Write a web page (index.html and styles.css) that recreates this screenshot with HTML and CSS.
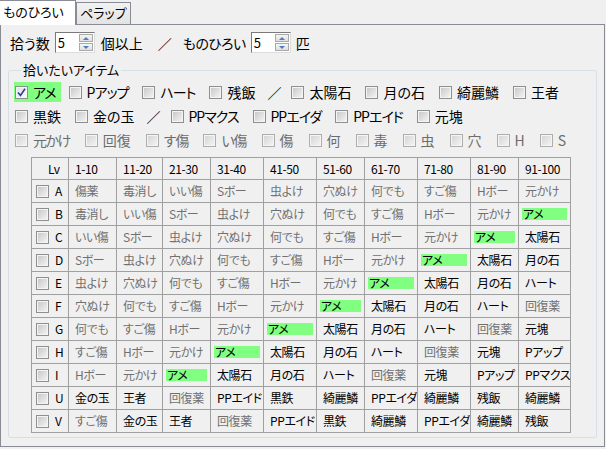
FILE: index.html
```html
<!DOCTYPE html>
<html lang="ja">
<head>
    <meta charset="UTF-8">
    <title>ものひろい</title>
    <link rel="stylesheet" href="styles.css">
</head>
<body>

    <div class="tabs">
        <div class="tab active">ものひろい</div>
        <div class="tab">ペラップ</div>
    </div>

    <div class="panel">

        <div class="count-row">
            <span>拾う数</span>
            <span class="spin"><span class="spin-val">5</span><span class="spin-btns"><span class="spin-up"></span><span class="spin-down"></span></span></span>
            <span class="after-spin">個以上</span>
            <span class="slash">／</span>
            <span class="kana">ものひろい</span>
            <span class="spin"><span class="spin-val">5</span><span class="spin-btns"><span class="spin-up"></span><span class="spin-down"></span></span></span>
            <span>匹</span>
        </div>

        <fieldset class="group">
            <legend>拾いたいアイテム</legend>

            <div class="item-row">
                <label class="item picked">
                    <span class="cb checked"><svg width="9" height="9" viewBox="0 0 9 9"><path d="M1 4.5 L3.5 7.5 L8 0.8" fill="none" stroke="#2b3f8f" stroke-width="1.6"/></svg></span><span class="kana">アメ</span>
                </label>
                <label class="item"><span class="cb"></span><span class="kana">Pアップ</span></label>
                <label class="item"><span class="cb"></span><span class="kana">ハート</span></label>
                <label class="item"><span class="cb"></span>残飯</label>
                <span class="item slash">／</span>
                <label class="item"><span class="cb"></span>太陽石</label>
                <label class="item"><span class="cb"></span>月の石</label>
                <label class="item"><span class="cb"></span>綺麗鱗</label>
                <label class="item"><span class="cb"></span>王者</label>
            </div>

            <div class="item-row">
                <label class="item"><span class="cb"></span>黒鉄</label>
                <label class="item"><span class="cb"></span>金の玉</label>
                <span class="item slash">／</span>
                <label class="item"><span class="cb"></span><span class="kana">PPマクス</span></label>
                <label class="item"><span class="cb"></span><span class="kana">PPエイダ</span></label>
                <label class="item"><span class="cb"></span><span class="kana">PPエイド</span></label>
                <label class="item"><span class="cb"></span>元塊</label>
            </div>

            <div class="item-row disabled">
                <label class="item"><span class="cb"></span><span class="kana narrow">元かけ</span></label>
                <label class="item"><span class="cb"></span>回復</label>
                <label class="item"><span class="cb"></span><span class="kana">す傷</span></label>
                <label class="item"><span class="cb"></span><span class="kana">い傷</span></label>
                <label class="item"><span class="cb"></span>傷</label>
                <label class="item"><span class="cb"></span>何</label>
                <label class="item"><span class="cb"></span>毒</label>
                <label class="item"><span class="cb"></span>虫</label>
                <label class="item"><span class="cb"></span>穴</label>
                <label class="item"><span class="cb"></span>H</label>
                <label class="item"><span class="cb"></span>S</label>
            </div>

            <table class="lv-table">
                <colgroup>
                    <col style="width:37px"><col style="width:48px"><col style="width:46px"><col style="width:48px"><col style="width:53px"><col style="width:53px"><col style="width:48px"><col style="width:53px"><col style="width:53px"><col style="width:48px"><col style="width:52px">
                </colgroup>
                <tr class="head">
                    <td class="lv-head">Lv</td><td>1-10</td><td>11-20</td><td>21-30</td><td>31-40</td><td>41-50</td><td>51-60</td><td>61-70</td><td>71-80</td><td>81-90</td><td>91-100</td>
                </tr>
                <tr>
                    <td class="lv"><span class="cb"></span>A</td>
                    <td class="dim">傷薬</td><td class="dim">毒消し</td><td class="dim">いい傷</td><td class="dim">Sボー</td><td class="dim">虫よけ</td><td class="dim">穴ぬけ</td><td class="dim">何でも</td><td class="dim">すご傷</td><td class="dim">Hボー</td><td class="dim">元かけ</td>
                </tr>
                <tr>
                    <td class="lv"><span class="cb"></span>B</td>
                    <td class="dim">毒消し</td><td class="dim">いい傷</td><td class="dim">Sボー</td><td class="dim">虫よけ</td><td class="dim">穴ぬけ</td><td class="dim">何でも</td><td class="dim">すご傷</td><td class="dim">Hボー</td><td class="dim">元かけ</td><td><span class="hit">アメ</span></td>
                </tr>
                <tr>
                    <td class="lv"><span class="cb"></span>C</td>
                    <td class="dim">いい傷</td><td class="dim">Sボー</td><td class="dim">虫よけ</td><td class="dim">穴ぬけ</td><td class="dim">何でも</td><td class="dim">すご傷</td><td class="dim">Hボー</td><td class="dim">元かけ</td><td><span class="hit">アメ</span></td><td>太陽石</td>
                </tr>
                <tr>
                    <td class="lv"><span class="cb"></span>D</td>
                    <td class="dim">Sボー</td><td class="dim">虫よけ</td><td class="dim">穴ぬけ</td><td class="dim">何でも</td><td class="dim">すご傷</td><td class="dim">Hボー</td><td class="dim">元かけ</td><td><span class="hit">アメ</span></td><td>太陽石</td><td>月の石</td>
                </tr>
                <tr>
                    <td class="lv"><span class="cb"></span>E</td>
                    <td class="dim">虫よけ</td><td class="dim">穴ぬけ</td><td class="dim">何でも</td><td class="dim">すご傷</td><td class="dim">Hボー</td><td class="dim">元かけ</td><td><span class="hit">アメ</span></td><td>太陽石</td><td>月の石</td><td>ハート</td>
                </tr>
                <tr>
                    <td class="lv"><span class="cb"></span>F</td>
                    <td class="dim">穴ぬけ</td><td class="dim">何でも</td><td class="dim">すご傷</td><td class="dim">Hボー</td><td class="dim">元かけ</td><td><span class="hit">アメ</span></td><td>太陽石</td><td>月の石</td><td>ハート</td><td class="dim">回復薬</td>
                </tr>
                <tr>
                    <td class="lv"><span class="cb"></span>G</td>
                    <td class="dim">何でも</td><td class="dim">すご傷</td><td class="dim">Hボー</td><td class="dim">元かけ</td><td><span class="hit">アメ</span></td><td>太陽石</td><td>月の石</td><td>ハート</td><td class="dim">回復薬</td><td>元塊</td>
                </tr>
                <tr>
                    <td class="lv"><span class="cb"></span>H</td>
                    <td class="dim">すご傷</td><td class="dim">Hボー</td><td class="dim">元かけ</td><td><span class="hit">アメ</span></td><td>太陽石</td><td>月の石</td><td>ハート</td><td class="dim">回復薬</td><td>元塊</td><td>Pアップ</td>
                </tr>
                <tr>
                    <td class="lv"><span class="cb"></span>I</td>
                    <td class="dim">Hボー</td><td class="dim">元かけ</td><td><span class="hit">アメ</span></td><td>太陽石</td><td>月の石</td><td>ハート</td><td class="dim">回復薬</td><td>元塊</td><td>Pアップ</td><td>PPマクス</td>
                </tr>
                <tr>
                    <td class="lv"><span class="cb"></span>U</td>
                    <td>金の玉</td><td>王者</td><td class="dim">回復薬</td><td>PPエイド</td><td>黒鉄</td><td>綺麗鱗</td><td>PPエイダ</td><td>綺麗鱗</td><td>残飯</td><td>綺麗鱗</td>
                </tr>
                <tr>
                    <td class="lv"><span class="cb"></span>V</td>
                    <td class="dim">すご傷</td><td>金の玉</td><td>王者</td><td class="dim">回復薬</td><td>PPエイド</td><td>黒鉄</td><td>綺麗鱗</td><td>PPエイダ</td><td>綺麗鱗</td><td>残飯</td>
                </tr>
            </table>
        </fieldset>
    </div>

</body>
</html>
```

FILE: styles.css
```css
* {
    margin: 0;
    padding: 0;
    box-sizing: border-box;
}

body {
    font-family: 'Noto Sans CJK JP', 'Liberation Sans', sans-serif;
    font-size: 13px;
    font-feature-settings: "palt";
    color: #000;
    background: #f0f0f0;
    width: 606px;
}


.tabs {
    display: flex;
    align-items: flex-end;
    height: 24px;
}

.tab {
    height: 22px;
    padding: 0 3px;
    line-height: 20px;
    border: 1px solid #898c95;
    border-bottom: none;
    background: linear-gradient(#f2f2f2, #e3e3e3);
}

.tab.active {
    height: 25px;
    width: 76px;
    margin-bottom: -1px;
    padding: 0 3px;
    line-height: 22px;
    background: #fff;
    border-left: none;
    position: relative;
    z-index: 1;
}


.panel {
    width: 605px;
    border: 1px solid #898c95;
    padding: 0 7px 8px 7px;
}


.count-row {
    display: flex;
    align-items: center;
    height: 21px;
    margin-top: 7px;
    padding-left: 2px;
    gap: 5px;
    font-size: 14px;
}

.count-row .after-spin {
    margin-left: 1px;
}

.count-row .slash {
    margin: 0 6px 0 10px;
}

.count-row .kana {
    letter-spacing: -0.5px;
}

.spin {
    display: flex;
    width: 40px;
    height: 21px;
    border: 1px solid #7a7a7a;
    border-right-color: #dcdcdc;
    border-bottom-color: #dcdcdc;
    background: #fff;
    font-size: 13px;
}

.spin-val {
    flex: 1;
    padding-left: 2px;
    line-height: 19px;
}

.spin-btns {
    display: flex;
    flex-direction: column;
    width: 16px;
    padding: 1px;
    gap: 1px;
}

.spin-up,
.spin-down {
    flex: 1;
    border: 1px solid #a9a9a9;
    background: linear-gradient(#f6f6f6, #dedede);
    position: relative;
}

.spin-up::after,
.spin-down::after {
    content: '';
    position: absolute;
    left: 3px;
    top: 2px;
    border-left: 3px solid transparent;
    border-right: 3px solid transparent;
}

.spin-up::after {
    border-bottom: 3px solid #4b7fc0;
}

.spin-down::after {
    border-top: 3px solid #4b7fc0;
}


.group {
    margin-top: 9px;
    border: 1px solid #d5dfe5;
    border-radius: 3px;
    padding: 2px 0 4px 6px;
}

.group legend {
    margin-left: 6px;
    padding: 0 2px;
    line-height: 16px;
}

.item-row {
    display: flex;
    align-items: center;
    height: 24px;
    column-gap: 14px;
    font-size: 14px;
    white-space: nowrap;
}

.item-row.disabled {
    column-gap: 15px;
    color: #6d6d6d;
}

.item {
    display: flex;
    flex: none;
    align-items: center;
    height: 20px;
}

.item .cb {
    margin-right: 5px;
}

.item .kana {
    letter-spacing: -1px;
}

.item .kana.narrow {
    letter-spacing: -1.5px;
}

.item.picked {
    background: #80ff80;
    margin: 0 -6px 0 -1px;
    padding: 0 5px 0 1px;
}

.item-row .slash {
    margin-left: -2px;
    margin-right: -4px;
}


.cb {
    display: inline-block;
    flex: none;
    width: 13px;
    height: 13px;
    border: 1px solid #8e8f8f;
    background: #f4f4f4;
    position: relative;
}

.cb::after {
    content: '';
    position: absolute;
    inset: 1px;
    background: linear-gradient(135deg, #c9c9c9, #f2f2f2);
}

.cb.checked::after {
    background: linear-gradient(135deg, #e2e2e2, #fafafa);
}

.cb svg {
    position: absolute;
    left: 1px;
    top: 1px;
    z-index: 1;
}

.disabled .cb {
    border-color: #aeaeae;
}

.disabled .cb::after {
    background: linear-gradient(135deg, #d6d6d6, #f2f2f2);
}


.lv-table {
    margin: 5px 0 0 16px;
    border-collapse: collapse;
    table-layout: fixed;
    width: 539px;
    font-size: 12px;
    letter-spacing: -0.4px;
}

.lv-table td {
    border: 1px solid #a0a0a0;
    height: 23px;
    padding: 0 0 0 6px;
    line-height: 14px;
    white-space: nowrap;
    overflow: hidden;
}

.lv-table tr.head td {
    height: 22px;
}

.lv-table td.dim {
    color: #707070;
}

.lv-table td.lv-head {
    padding-left: 16px;
}

.lv-table td.lv {
    padding-left: 4px;
}

.lv .cb {
    vertical-align: -2px;
    margin-right: 6px;
}

.hit {
    display: block;
    margin: 0 3px 0 -3px;
    padding-left: 1px;
    height: 12px;
    line-height: 12px;
    background: #80ff80;
}
```
